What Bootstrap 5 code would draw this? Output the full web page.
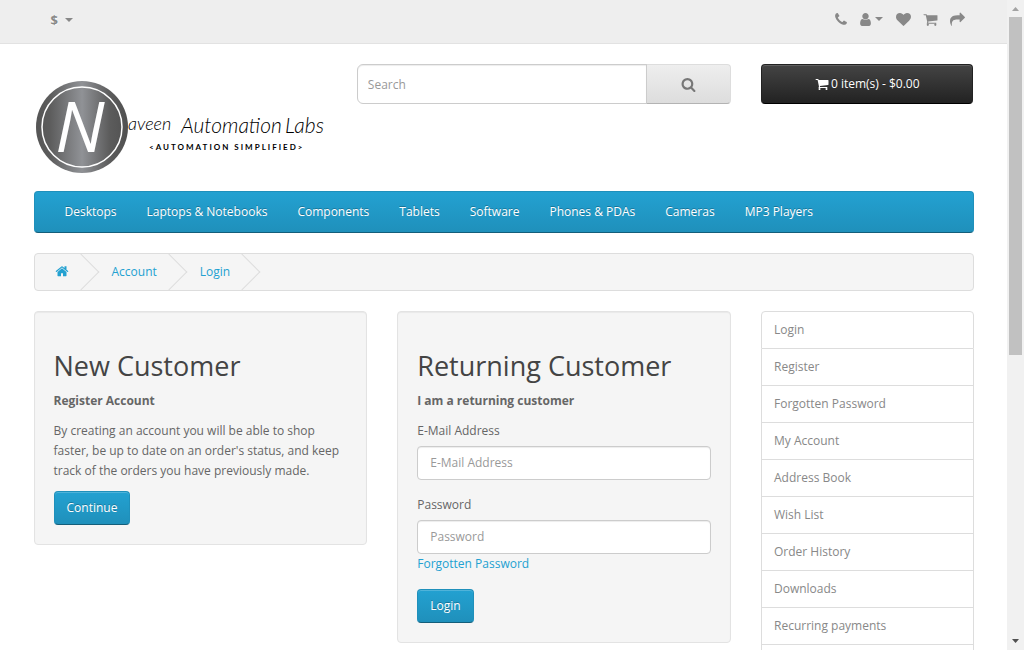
<!DOCTYPE html>
<html lang="en">
<head>
<meta charset="utf-8">
<meta name="viewport" content="width=device-width, initial-scale=1">
<title>Account Login</title>
<link href="https://cdn.jsdelivr.net/npm/bootstrap@5.3.0/dist/css/bootstrap.min.css" rel="stylesheet">
<style>
body { font-family: "Open Sans", sans-serif; font-size: 12px; line-height: 20px; color: #666; }
a { color: #23a1d1; text-decoration: none; }
svg { fill: currentColor; }
.shell { height: 100vh; }
.page { min-width: 0; overflow: hidden; }
.shop-wrap { max-width: 970px; padding: 0 15px; }
.row { --bs-gutter-x: 30px; }
.shop-header { padding-top: 20px; }
.top-bar { background: #eee; border-bottom: 1px solid #e2e2e2; height: 44px; padding-bottom: 5px; }
.top-bar a, .top-bar button { color: #888; text-shadow: 0 1px 0 #fff; }
.top-inner { padding: 0 9px 0 17px; }
.top-links { gap: 13px; }
.caret { width: 0; border: 4px solid transparent; border-top-color: #888; border-bottom: 0; }
.currency { gap: 7px; font-size: 13px; line-height: 20px; padding-top: 2px; }
.top-gap { gap: 4px; }
.logo-art { width: 100%; height: auto; max-width: 293px; margin-bottom: 10px; }
.search-box .form-control { height: 40px; font-size: 12px; padding: 0 10px; border-radius: 6px; }
.form-control { font-size: 12px; line-height: 20px; padding: 6px 12px; border: 1px solid #ccc; border-radius: 4px; color: #555; box-shadow: inset 0 1px 1px rgba(0,0,0,.075); }
.form-control::placeholder { color: #999; }
.search-btn { width: 85px; color: #777; background: linear-gradient(#eee, #ddd); border: 1px solid; border-color: #ddd #ddd #b3b3b3 #b7b7b7; border-radius: 4px; }
.cart-btn { height: 40px; gap: 2px; font-size: 12px; line-height: 18px; color: #fff; background: linear-gradient(#444, #222); border: 1px solid; border-color: #222 #222 #000; border-radius: 4px; box-shadow: inset 0 1px 0 rgba(255,255,255,.15); text-shadow: 0 -1px 0 rgba(0,0,0,.25); }
.menu { background: linear-gradient(#23a1d1, #1f90bb); border: 1px solid; border-color: #1f90bb #1f90bb #145e7a; border-radius: 4px; padding: 0 15px; }
.menu .nav-link { color: #fff; padding: 10px 15px; text-shadow: 0 -1px 0 rgba(0,0,0,.25); }
.crumbs { background: #f5f5f5; border: 1px solid #ddd; border-radius: 4px; padding: 8px 0; margin: 20px 0; gap: 3px; overflow: hidden; }
.crumbs li { position: relative; padding: 0 20px; }
.crumbs li::after { content: ""; position: absolute; top: -3px; right: -5px; width: 26px; height: 26px; border: solid #ddd; border-width: 1px 1px 0 0; transform: rotate(45deg); }
.panel-well { background: #f5f5f5; border: 1px solid #e3e3e3; border-radius: 4px; padding: 19px; box-shadow: inset 0 1px 1px rgba(0,0,0,.05); }
.panel-well h2 { font-size: 27px; line-height: 30px; font-weight: 400; color: #444; margin: 20px 0 10px; }
.panel-well p { margin-bottom: 10px; }
.panel-well label { margin-bottom: 5px; }
.field { margin-bottom: 15px; }
.act { font-size: 12px; line-height: 20px; padding: 6px 12px; color: #fff; background: linear-gradient(#23a1d1, #1f90bb); border: 1px solid; border-color: #1f90bb #1f90bb #145e7a; border-radius: 4px; box-shadow: inset 0 1px 0 rgba(255,255,255,.2); text-shadow: 0 -1px 0 rgba(0,0,0,.25); }
.side-list .list-group-item { border-color: #ddd; color: #888; padding: 8px 12px; min-height: 18px; }
.side-list { border-radius: 4px; }
.scroller { width: 17px; background: #f1f1f1; }
.scroller .thumb { width: 13px; height: 52%; background: #c1c1c1; }
.arrow { width: 17px; height: 17px; }
</style>
</head>
<body>
<div class="shell d-flex">
<div class="page flex-grow-1">
  <nav class="top-bar" aria-label="Top">
    <div class="shop-wrap mx-auto h-100">
      <div class="top-inner d-flex justify-content-between align-items-center h-100">
        <button type="button" class="currency btn px-0 pb-0 border-0 d-flex align-items-center"><strong>$</strong><span class="caret"></span></button>
        <ul class="top-links list-unstyled d-flex align-items-center mb-0">
          <li class="d-flex"><a class="d-flex" href="#" aria-label="Phone"><svg width="12" height="15" viewBox="180 0 1434 1792"><path d="M1600 1240q0 27-10 70.5t-21 68.5q-21 50-122 106-94 51-186 51-27 0-53-3.5t-57-12.5-47-14.5-55.5-20.5-49.5-18q-98-35-175-83-127-79-264-216t-216-264q-48-77-83-175-3-9-18-49.5t-20.5-55.5-14.5-47-12.5-57-3.5-53q0-92 51-186 56-101 106-122 25-11 68.5-21t70.5-10q14 0 21 3 18 6 53 76 11 19 30 54t35 63.5 31 53.5q3 4 17.5 25t21.5 35.5 7 28.5q0 20-28.5 50t-62 55-62 53-28.5 46q0 9 5 22.5t8.5 20.5 14 24 11.5 19q76 137 174 235t235 174q2 1 19 11.5t24 14 20.5 8.5 22.5 5q18 0 46-28.5t53-62 55-62 50-28.5q14 0 28.5 7t35.5 21.5 25 17.5q25 15 53.5 31t63.5 35 54 30q70 35 76 53 3 7 3 21z"/></svg></a></li>
          <li><a class="top-gap d-flex align-items-center" href="#" aria-label="My Account"><svg width="11" height="15" viewBox="239 0 1314 1792"><path d="M1536 1399q0 109-62.500 187t-150.500 78h-854q-88 0-150.500-78t-62.500-187q0-85 8.500-160.500t31.500-152 58.500-131 94-89 134.500-34.500q131 128 313 128t313-128q76 0 134.500 34.500t94 89 58.500 131 31.500 152 8.500 160.500zm-256-887q0 159-112.500 271.500t-271.500 112.500-271.500-112.500-112.500-271.500 112.500-271.500 271.500-112.500 271.500 112.500 112.500 271.500z"/></svg><span class="caret"></span></a></li>
          <li><a class="d-flex" href="#" aria-label="Wish List"><svg width="15" height="15" viewBox="0 0 1792 1792"><path d="M896 1664q-26 0-44-18l-624-602q-10-8-27.500-26t-55.500-65.500-68-97.500-53.500-121-23.500-138q0-220 127-344t351-124q62 0 126.500 21.500t120 58 95.500 68.500 76 68q36-36 76-68t95.500-68.500 120-58 126.500-21.500q224 0 351 124t127 344q0 221-229 450l-623 600q-18 18-44 18z"/></svg></a></li>
          <li><a class="d-flex" href="#" aria-label="Shopping Cart"><svg width="13" height="15" viewBox="120 0 1553 1792" overflow="visible"><use href="#cart"/></svg></a></li>
          <li><a class="d-flex" href="#" aria-label="Checkout"><svg width="15" height="15" viewBox="0 0 1792 1792"><path d="M1792 640q0 26-19 45l-512 512q-19 19-45 19t-45-19-19-45v-256h-224q-98 0-175.500 6t-154 21.500-133 42.500-105.500 69.500-80 101-48.500 138.500-17.500 181q0 55 5 123 0 6 2.500 23.500t2.500 26.500q0 15-8.500 25t-23.500 10q-16 0-28-17-7-9-13-22t-13.500-30-10.500-24q-127-285-127-451 0-199 53-333 162-403 875-403h224v-256q0-26 19-45t45-19 45 19l512 512q19 19 19 45z"/></svg></a></li>
        </ul>
      </div>
    </div>
  </nav>

  <div class="shop-wrap mx-auto">
    <header class="shop-header row">
      <div class="col-4">
        <a href="#" class="d-block text-black">
          <svg class="logo-art d-block" viewBox="0 0 293 117" role="img" aria-label="Naveen Automation Labs">
            <defs>
              <linearGradient id="steel"><stop offset="0" stop-color="#555"/><stop offset=".15" stop-color="#5c5c5c"/><stop offset=".5" stop-color="#909296"/><stop offset=".8" stop-color="#5c5c5c"/><stop offset="1" stop-color="#505050"/></linearGradient>
              <path id="cart" d="M704 1536q0 52-38 90t-90 38-90-38-38-90 38-90 90-38 90 38 38 90zm896 0q0 52-38 90t-90 38-90-38-38-90 38-90 90-38 90 38 38 90zm128-1088v512q0 24-16.500 42.500t-40.500 21.500l-1044 122q13 60 13 70 0 16-24 64h920q26 0 45 19t19 45-19 45-45 19h-1024q-26 0-45-19t-19-45q0-11 8-31.500t16-36 21.500-40 15.500-29.500l-177-823h-204q-26 0-45-19t-19-45 19-45 45-19h256q16 0 28.500 6.500t19.500 15.500 13 24.500 8 26 5.500 29.500 4.500 26h1201q26 0 45 19t19 45z"/>
            </defs>
            <circle cx="48" cy="63" r="46" fill="url(#steel)"/>
            <circle cx="48" cy="63" r="40" fill="none" stroke="#fff" stroke-width="1.500"/>
            <text x="46" y="88" text-anchor="middle" font-size="70" font-style="italic" fill="#fff" font-family="'Liberation Sans Narrow', 'Open Sans', sans-serif">N</text>
            <g font-family="Lato, sans-serif" font-style="italic" font-weight="300">
              <text x="94" y="66" font-size="18">aveen</text>
              <text x="147" y="69" font-size="21">Automation</text>
              <text x="251" y="69" font-size="21">Labs</text>
            </g>
            <text x="115" y="86" font-family="Lato, sans-serif" font-size="8" font-weight="700" letter-spacing="2">&lt;AUTOMATION SIMPLIFIED&gt;</text>
          </svg>
        </a>
      </div>
      <div class="col-5">
        <div class="search-box input-group">
          <input type="text" class="form-control" placeholder="Search" aria-label="Search">
          <button type="button" class="search-btn" aria-label="Submit search"><svg width="15" height="15" viewBox="0 0 1792 1792"><path d="M1216 832q0-185-131.500-316.500t-316.500-131.500-316.500 131.500-131.500 316.500 131.500 316.500 316.500 131.500 316.500-131.500 131.500-316.500zm512 832q0 52-38 90t-90 38q-54 0-90-38l-343-342q-179 124-399 124-143 0-273.500-55.500t-225-150-150-225-55.500-273.500 55.500-273.500 150-225 225-150 273.500-55.500 273.500 55.500 225 150 150 225 55.500 273.500q0 220-124 399l343 343q37 37 37 90z"/></svg></button>
        </div>
      </div>
      <div class="col-3">
        <button type="button" class="cart-btn w-100 d-flex justify-content-center align-items-center"><svg width="14" height="14" viewBox="0 0 1792 1792"><use href="#cart"/></svg><span>0 item(s) - $0.00</span></button>
      </div>
    </header>

    <nav class="menu" aria-label="Categories">
      <ul class="nav">
        <li><a class="nav-link" href="#">Desktops</a></li>
        <li><a class="nav-link" href="#">Laptops &amp; Notebooks</a></li>
        <li><a class="nav-link" href="#">Components</a></li>
        <li><a class="nav-link" href="#">Tablets</a></li>
        <li><a class="nav-link" href="#">Software</a></li>
        <li><a class="nav-link" href="#">Phones &amp; PDAs</a></li>
        <li><a class="nav-link" href="#">Cameras</a></li>
        <li><a class="nav-link" href="#">MP3 Players</a></li>
      </ul>
    </nav>

    <ul class="crumbs list-unstyled d-flex">
      <li><a class="d-flex" href="#" aria-label="Home"><svg class="mt-1" width="14" height="14" viewBox="0 128 1792 1792"><path transform="translate(0 -100)" d="M1472 992v480q0 26-19 45t-45 19h-384v-384h-256v384h-384q-26 0-45-19t-19-45v-480q0-1 .5-3t.5-3l575-474 575 474q1 2 1 6zm223-69l-62 74q-8 9-21 11h-3q-13 0-21-7l-692-577-692 577q-12 8-24 7-13-2-21-11l-62-74q-8-10-7-23.500t11-21.500l719-599q32-26 76-26t76 26l244 204v-195q0-14 9-23t23-9h192q14 0 23 9t9 23v408l219 182q10 8 11 21.500t-7 23.500z" style="overflow:visible"/></svg></a></li>
      <li><a href="#">Account</a></li>
      <li><a href="#">Login</a></li>
    </ul>

    <div class="row">
      <main class="col-9">
        <div class="row align-items-start">
          <div class="col-6">
            <section class="panel-well">
              <h2>New Customer</h2>
              <p><strong>Register Account</strong></p>
              <p>By creating an account you will be able to shop faster, be up to date on an order's status, and keep track of the orders you have previously made.</p>
              <button type="button" class="act d-block">Continue</button>
            </section>
          </div>
          <div class="col-6">
            <section class="panel-well">
              <h2>Returning Customer</h2>
              <p><strong>I am a returning customer</strong></p>
              <form>
                <div class="field">
                  <label class="d-block" for="email">E-Mail Address</label>
                  <input type="text" id="email" class="form-control" placeholder="E-Mail Address">
                </div>
                <div class="field">
                  <label class="d-block" for="password">Password</label>
                  <input type="password" id="password" class="form-control" placeholder="Password">
                  <a href="#">Forgotten Password</a>
                </div>
                <button type="button" class="act d-block">Login</button>
              </form>
            </section>
          </div>
        </div>
      </main>
      <aside class="col-3">
        <div class="side-list list-group">
          <a href="#" class="list-group-item">Login</a>
          <a href="#" class="list-group-item">Register</a>
          <a href="#" class="list-group-item">Forgotten Password</a>
          <a href="#" class="list-group-item">My Account</a>
          <a href="#" class="list-group-item">Address Book</a>
          <a href="#" class="list-group-item">Wish List</a>
          <a href="#" class="list-group-item">Order History</a>
          <a href="#" class="list-group-item">Downloads</a>
          <a href="#" class="list-group-item">Recurring payments</a>
          <div class="list-group-item"></div>
        </div>
      </aside>
    </div>
  </div>
</div>
<div class="scroller d-flex flex-column align-items-center flex-shrink-0" aria-hidden="true">
  <svg class="arrow" viewBox="0 0 17 17"><path fill="#a3a3a3" d="M5 11h7L8.500 7z"/></svg>
  <div class="thumb"></div>
  <svg class="arrow mt-auto" viewBox="0 0 17 17"><path fill="#505050" d="M5 6h7l-3.500 4z"/></svg>
</div>
</div>
<script src="https://cdn.jsdelivr.net/npm/bootstrap@5.3.0/dist/js/bootstrap.bundle.min.js"></script>
</body>
</html>
